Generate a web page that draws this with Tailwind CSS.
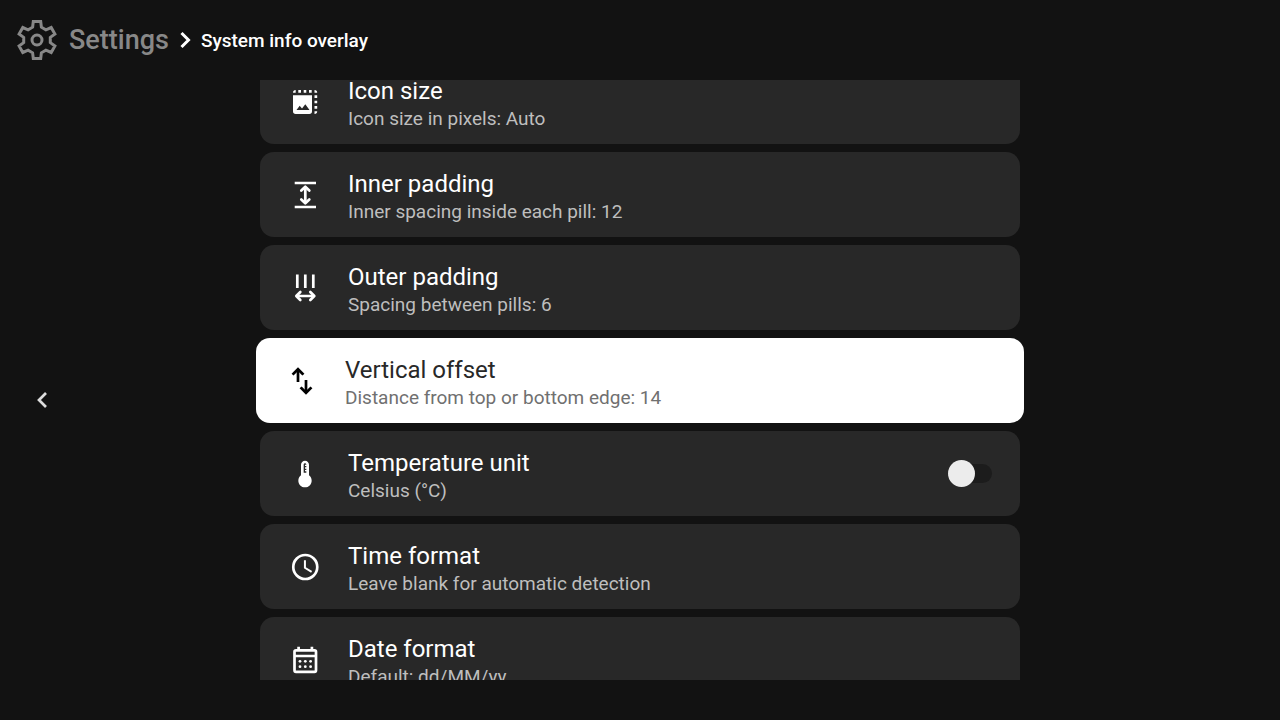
<!DOCTYPE html>
<html lang="en">
<head>
<meta charset="utf-8">
<meta name="viewport" content="width=device-width, initial-scale=1">
<title>System info overlay</title>
<script src="https://cdn.jsdelivr.net/npm/@tailwindcss/browser@4"></script>
</head>
<body class="flex h-screen flex-col overflow-hidden bg-[#121212] font-['Roboto',sans-serif] text-white">
<header class="flex h-20 shrink-0 items-center pl-[15px]">
  <svg class="size-11 shrink-0 text-[#888888]" viewBox="-22 -22 44 44" fill="none" stroke="currentColor" stroke-width="3" aria-hidden="true">
    <path d="M-4.400-12.800L-3.700-18.500H3.700L4.400-12.800L8.900-10.200L14.200-12.500L17.900-6L13.300-2.600V2.600L17.900 6L14.200 12.500L8.900 10.200L4.400 12.800L3.700 18.500H-3.700L-4.400 12.800L-8.900 10.200L-14.200 12.500L-17.900 6L-13.300 2.600V-2.600L-17.900-6L-14.200-12.500L-8.900-10.200Z"/>
    <circle cx="0" cy="0" r="5"/>
  </svg>
  <a href="#" class="ml-[10px] text-[27px] leading-8 font-medium text-[#888888]">Settings</a>
  <svg class="ml-1 size-6 shrink-0" viewBox="0 0 24 24" fill="none" stroke="currentColor" stroke-width="3" aria-hidden="true"><path d="M8.500 5l7 7-7 7"/></svg>
  <h1 class="ml-1 pt-[2px] text-[19px] leading-8 font-medium">System info overlay</h1>
</header>
<div class="flex min-h-0 flex-1 pb-10">
  <nav class="flex w-20 shrink-0 items-center pt-10 pl-7">
    <button type="button" aria-label="Back" class="flex size-7 items-center justify-center text-[#dddddd]">
      <svg class="size-7" viewBox="0 0 28 28" fill="none" stroke="currentColor" stroke-width="2.700" aria-hidden="true"><path d="M18 7l-7 7 7 7"/></svg>
    </button>
  </nav>
  <main class="flex min-w-0 flex-1 justify-center overflow-hidden pr-20">
    <ul class="-mt-[21px] flex h-max w-full max-w-[768px] flex-col gap-2 px-1">
      <li><button type="button" class="flex h-[85px] w-full items-center gap-[27px] rounded-[14px] bg-[#282828] px-[29px] text-left">
        <svg class="size-8 shrink-0" viewBox="0 0 32 32" fill="currentColor" aria-hidden="true"><path fill-rule="evenodd" d="M4 9.300H23V25.300Q23 28 20.300 28H6.700Q4 28 4 25.300ZM7.500 24H20.500L16.300 18.300L13 22.600L10.700 19.800Z"/><path d="M4 6.700Q4 4 6.700 4V6.700ZM9.300 4H12V6.700H9.300ZM14.700 4H17.300V6.700H14.700ZM20 4H22.700V6.700H20ZM25.500 4Q28.200 4 28.200 6.700H25.500ZM25.500 9.300H28.200V12H25.500ZM25.500 14.700H28.200V17.300H25.500ZM25.500 20H28.200V22.700H25.500ZM25.500 25.300H28.200Q28.200 28 25.500 28Z"/></svg>
        <span class="min-w-0 pt-[2px]"><span class="block text-2xl leading-8">Icon size</span><span class="block text-[19px] leading-6 text-[#bebebe]">Icon size in pixels: Auto</span></span>
      </button></li>
      <li><button type="button" class="flex h-[85px] w-full items-center gap-[27px] rounded-[14px] bg-[#282828] px-[29px] text-left">
        <svg class="size-8 shrink-0" viewBox="0 0 32 32" fill="none" stroke="currentColor" stroke-width="2.700" aria-hidden="true"><path d="M5.700 4H27M5.700 28H27M16.300 8V24"/><path stroke-linecap="round" stroke-linejoin="round" d="M12.300 11.500L16.300 7.700L20.300 11.500M12.300 20.500L16.300 24.300L20.300 20.500"/></svg>
        <span class="min-w-0 pt-[2px]"><span class="block text-2xl leading-8">Inner padding</span><span class="block text-[19px] leading-6 text-[#bebebe]">Inner spacing inside each pill: 12</span></span>
      </button></li>
      <li><button type="button" class="flex h-[85px] w-full items-center gap-[27px] rounded-[14px] bg-[#282828] px-[29px] text-left">
        <svg class="size-8 shrink-0" viewBox="0 0 32 32" fill="none" stroke="currentColor" stroke-width="2.700" aria-hidden="true"><path d="M8.300 2.500V16M16.300 2.500V16M24.300 2.500V16M7.500 24H25"/><path stroke-linecap="round" stroke-linejoin="round" d="M11.300 20L7.300 24L11.300 28M21.300 20L25.300 24L21.300 28"/></svg>
        <span class="min-w-0 pt-[2px]"><span class="block text-2xl leading-8">Outer padding</span><span class="block text-[19px] leading-6 text-[#bebebe]">Spacing between pills: 6</span></span>
      </button></li>
      <li class="-mx-1"><button type="button" class="flex h-[85px] w-full items-center gap-[27px] rounded-[14px] bg-white px-[30px] text-left text-[#282828]">
        <svg class="size-8 shrink-0 text-black" viewBox="0 0 32 32" fill="none" stroke="currentColor" stroke-width="2.700" aria-hidden="true"><path d="M12 17V4.500M20 15V27.500"/><path stroke-linecap="square" d="M7.500 8.700L12 4.200L16.500 8.700M15.500 23.300L20 27.800L24.500 23.300"/></svg>
        <span class="min-w-0 pt-[2px]"><span class="block text-2xl leading-8">Vertical offset</span><span class="block text-[19px] leading-6 text-[#707070]">Distance from top or bottom edge: 14</span></span>
      </button></li>
      <li><label class="flex h-[85px] w-full items-center gap-[27px] rounded-[14px] bg-[#282828] pr-7 pl-[29px]">
        <svg class="size-8 shrink-0" viewBox="0 0 24 24" fill="currentColor" aria-hidden="true"><path fill-rule="evenodd" d="M15 13V5c0-1.660-1.340-3-3-3S9 3.340 9 5v8c-1.210.910-2 2.370-2 4 0 2.760 2.240 5 5 5s5-2.240 5-5c0-1.630-.790-3.090-2-4zm-4-8c0-.550.450-1 1-1s1 .450 1 1h-1v1h1v1h-1v1h1v1h-1v1h1v1h-2V5z"/></svg>
        <span class="min-w-0 flex-1 pt-[2px]"><span class="block text-2xl leading-8">Temperature unit</span><span class="block text-[19px] leading-6 text-[#bebebe]">Celsius (°C)</span></span>
        <span class="flex h-[27px] w-11 shrink-0 items-center">
          <input type="checkbox" role="switch" class="flex h-[19px] w-11 appearance-none items-center rounded-full bg-[#1c1c1c] before:block before:size-[27px] before:shrink-0 before:rounded-full before:bg-[#ececec] checked:justify-end">
        </span>
      </label></li>
      <li><button type="button" class="flex h-[85px] w-full items-center gap-[27px] rounded-[14px] bg-[#282828] px-[29px] text-left">
        <svg class="size-8 shrink-0" viewBox="0 0 24 24" fill="none" stroke="currentColor" stroke-width="2" aria-hidden="true"><circle cx="12.200" cy="12" r="9"/><path stroke-width="1.500" d="M11.950 7v5.600l5 3"/></svg>
        <span class="min-w-0 pt-[2px]"><span class="block text-2xl leading-8">Time format</span><span class="block text-[19px] leading-6 text-[#bebebe]">Leave blank for automatic detection</span></span>
      </button></li>
      <li><button type="button" class="flex h-[85px] w-full items-center gap-[27px] rounded-[14px] bg-[#282828] px-[29px] text-left">
        <svg class="size-8 shrink-0" viewBox="0 0 32 32" fill="none" stroke="currentColor" stroke-width="2.700" aria-hidden="true"><rect x="5.500" y="6.300" width="21.500" height="21.500" rx="1.500"/><path d="M5.500 12H27M9.600 2.700V7M22.900 2.700V7"/><g fill="currentColor" stroke="none"><circle cx="11" cy="17.300" r="1.400"/><circle cx="16.300" cy="17.300" r="1.400"/><circle cx="21.600" cy="17.300" r="1.400"/><circle cx="11" cy="22.700" r="1.400"/><circle cx="16.300" cy="22.700" r="1.400"/><circle cx="21.600" cy="22.700" r="1.400"/></g></svg>
        <span class="min-w-0 pt-[2px]"><span class="block text-2xl leading-8">Date format</span><span class="block text-[19px] leading-6 text-[#bebebe]">Default: dd/MM/yy</span></span>
      </button></li>
    </ul>
  </main>
</div>
</body>
</html>
